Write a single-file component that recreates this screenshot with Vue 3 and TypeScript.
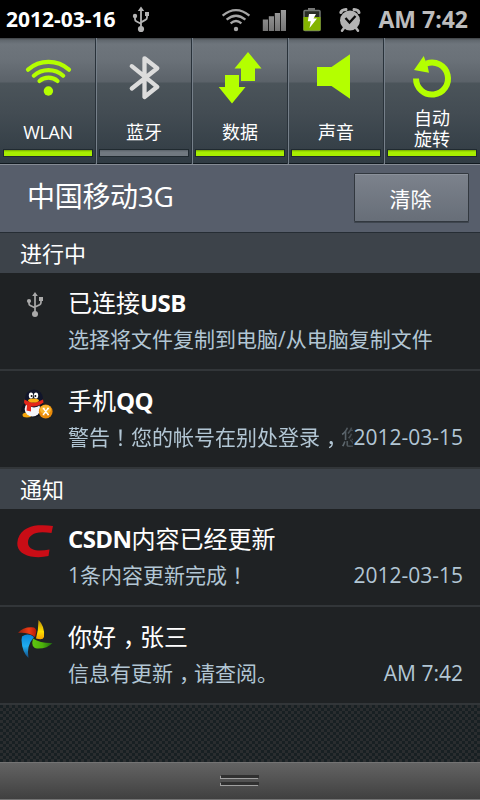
<script setup lang="ts">
interface Tile {
  id: string
  lines: string[]
  on: boolean
  view: string
}
interface Run {
  text: string
  kind: 'plain' | 'strong' | 'mid' | 'comma'
}
interface Notice {
  id: string
  view: string
  title: Run[]
  body: Run[]
  time: string
}
interface Section {
  label: string
  items: Notice[]
}

const plain = (text: string): Run => ({ text, kind: 'plain' })
const strong = (text: string): Run => ({ text, kind: 'strong' })
// Punctuation centred horizontally in its em box
const mid = (text: string): Run => ({ text, kind: 'mid' })
const comma: Run = { text: '，', kind: 'comma' }

const tiles: Tile[] = [
  { id: 'wlan', lines: ['WLAN'], on: true, view: '0 38 96 70' },
  { id: 'bluetooth', lines: ['蓝牙'], on: false, view: '96 38 96 70' },
  { id: 'data', lines: ['数据'], on: true, view: '192 38 96 70' },
  { id: 'sound', lines: ['声音'], on: true, view: '288 38 96 70' },
  { id: 'rotate', lines: ['自动', '旋转'], on: true, view: '384 38 96 70' },
]

const sections: Section[] = [
  {
    label: '进行中',
    items: [
      { id: 'usb', view: '0 273 68 96', title: [plain('已连接'), strong('USB')], body: [plain('选择将文件复制到电脑/从电脑复制文件')], time: '' },
      { id: 'qq', view: '0 371 68 96', title: [plain('手机'), strong('QQ')], body: [plain('警告'), mid('！'), plain('您的帐号在别处登录'), comma, plain('您')], time: '2012-03-15' },
    ],
  },
  {
    label: '通知',
    items: [
      { id: 'csdn', view: '0 509 68 96', title: [strong('CSDN'), plain('内容已经更新')], body: [plain('1条内容更新完成'), mid('！')], time: '2012-03-15' },
      { id: 'pinwheel', view: '0 607 68 96', title: [plain('你好'), comma, plain('张三')], body: [plain('信息有更新'), comma, plain('请查阅。')], time: 'AM 7:42' },
    ],
  },
]
</script>

<template>
  <div class="screen">
    <header class="status">
      <span class="date">2012-03-16</span>
      <svg class="s-usb" viewBox="132 4 18 29" width="18" height="29">
        <g fill="none" stroke="#b4b4b4" stroke-width="1.8">
          <path d="M141 9V28M135 15v3.2q0 1.6 1.6 2.3l4.4 2.2M147 13v3.5q0 1.6-1.6 2.4l-4.4 2.5" />
        </g>
        <path d="M141 5.5l3.2 4.6h-6.4zM145 11h4v4h-4z" fill="#b4b4b4" />
        <circle cx="135" cy="15" r="2.2" fill="#b4b4b4" /><circle cx="141" cy="28" r="3.1" fill="#b4b4b4" />
      </svg>
      <div class="tray">
        <svg viewBox="221 4 30 29" width="30" height="29">
          <g fill="none" stroke="#a6a6a6" stroke-width="2.2">
            <path d="M222.6 14.6Q236 3.600 249.400 14.600M226.600 18.700Q236 10.800 245.400 18.700M230.600 22.300Q236 17.700 241.400 22.300" />
          </g>
          <circle cx="236" cy="28" r="2.200" fill="#a6a6a6" />
        </svg>
        <svg viewBox="262 4 25 29" width="25" height="29">
          <defs><linearGradient id="sig" x1="0" y1="0" x2="0" y2="1"><stop offset="0" stop-color="#9c9c9c" /><stop offset="1" stop-color="#747474" /></linearGradient></defs>
          <path d="M262.800 18.500h5.200v11.500h-5.200zM268.800 15.300h5.200v14.700h-5.200zM274.800 12h5.200v18h-5.200zM280.800 9h5.200v21h-5.200z" fill="url(#sig)" />
        </svg>
        <svg viewBox="302 4 20 29" width="20" height="29">
          <path d="M308 7h7v3h-7z" fill="#777" />
          <rect x="304" y="9.500" width="16" height="20" rx="1" fill="#292d25" stroke="#737875" stroke-width="1.500" />
          <path d="M303.500 16h17v13.500h-17z" fill="#84b400" />
          <path d="M309 13h7l-2.500 4.500h3.500l-7.500 9.500 1.300-6.800h-3z" fill="#fff" />
        </svg>
        <svg viewBox="337 4 27 29" width="27" height="29">
          <g fill="none" stroke="#b3b3b3" stroke-linecap="round">
            <path d="M340.800 11.500Q341.500 9 346 8.600M359 11.500Q358.500 9 354 8.600" stroke-width="3" />
            <path d="M344 27l-2 2.700M356 27l2 2.700" stroke-width="2.500" />
          </g>
          <circle cx="350" cy="19.500" r="10" fill="#b3b3b3" />
          <path d="M345.500 17l4 4.500 6-6.500" fill="none" stroke="#080808" stroke-width="2.300" />
        </svg>
      </div>
      <span class="clock">AM 7:42</span>
    </header>

    <nav class="tiles">
      <div v-for="t in tiles" :key="t.id" class="tile">
        <svg class="tile-icon" :viewBox="t.view" width="96" height="70">
          <g v-if="t.id === 'wlan'">
            <path d="M28 69.700A31 31 0 0 1 69 69.700M33.800 75.700A22 22 0 0 1 63.200 75.700M39.500 81A14 14 0 0 1 57.500 81" fill="none" stroke="#b4ff00" stroke-width="4.200" stroke-linecap="round" />
            <circle cx="48.400" cy="91" r="4.700" fill="#b4ff00" />
          </g>
          <path v-else-if="t.id === 'bluetooth'" d="M131.800 66.200L157.300 86.800 144.500 97V58.300L157.300 68.200 131.800 88.500" fill="none" stroke="#dcdcdc" stroke-width="4.300" stroke-linecap="round" stroke-linejoin="round" />
          <path v-else-if="t.id === 'data'" d="M248 52L261.500 68.500H255V81H241V68.500H234.500ZM225 75H239V87H245.500L232 103.500 218.700 87H225Z" fill="#b4ff00" />
          <path v-else-if="t.id === 'sound'" d="M317 67H331.500L350 54.300V98.700L331.500 86H317Z" fill="#b4ff00" />
          <g v-else>
            <path d="M416 78.500A16 16 0 1 0 426.500 63.500" fill="none" stroke="#b4ff00" stroke-width="6" />
            <path d="M423.700 56L414 70 429 72.700 427.700 66.500 429.500 60.800 425.800 61.500Z" fill="#b4ff00" />
          </g>
        </svg>
        <div class="tile-label" :class="{ double: t.lines.length > 1, latin: t.id === 'wlan' }">
          <span v-for="l in t.lines" :key="l">{{ l }}</span>
        </div>
        <div class="bar" :class="{ on: t.on }"></div>
      </div>
    </nav>

    <div class="carrier">
      <span class="carrier-name">中国移动3G</span>
      <button class="clear" type="button">清除</button>
    </div>

    <section v-for="s in sections" :key="s.label">
      <h2 class="heading">{{ s.label }}</h2>
      <article v-for="n in s.items" :key="n.id" class="row">
        <svg class="row-icon" :viewBox="n.view" width="68" height="96">
          <g v-if="n.id === 'usb'">
            <path d="M35 296V313M29 301v2.500q0 1.500 1.300 2.100l4.700 2.100M41 300v2.500q0 1.500-1.300 2.200l-4.700 2.300" fill="none" stroke="#aaa" stroke-width="1.700" />
            <path d="M35 292l2.800 4h-5.600zM39 297h4v4h-4z" fill="#aaa" />
            <circle cx="29" cy="301" r="2.100" fill="#aaa" /><circle cx="35" cy="314" r="3" fill="#aaa" />
          </g>
          <g v-else-if="n.id === 'qq'">
            <path d="M25 403Q20 407 21.500 412L25 411Z" fill="#11141f" />
            <ellipse cx="33.500" cy="408" rx="10.500" ry="9.500" fill="#11141f" />
            <ellipse cx="27" cy="415" rx="4.500" ry="2.500" fill="#f5a50c" />
            <ellipse cx="32.500" cy="409" rx="7.800" ry="7.500" fill="#f4f6fa" />
            <ellipse cx="34" cy="398.500" rx="9" ry="9" fill="#11152a" />
            <ellipse cx="31" cy="395.500" rx="2.200" ry="3.100" fill="#fff" /><ellipse cx="36" cy="395.500" rx="2.200" ry="3.100" fill="#fff" />
            <circle cx="31.600" cy="396" r="1" fill="#111" /><circle cx="35.400" cy="396" r="1" fill="#111" />
            <path d="M24.500 399.500Q33 405.500 43 399.500L43.500 402.500Q38 407 31 406.500L31 411.500 26.500 410.500 27 405.500Q23 404 24.500 399.500Z" fill="#e52719" />
            <ellipse cx="33.500" cy="400.500" rx="5.500" ry="2" fill="#f9ad13" />
            <circle cx="45.700" cy="411.500" r="6.900" fill="#e88a09" /><ellipse cx="45.500" cy="409.500" rx="5.500" ry="4.500" fill="#f8b42d" />
            <path d="M43.500 408.500l4.500 6M48 408.500l-4.500 6M42.700 408.500h2M47 408.500h2M42.700 414.500h2M47 414.500h2" stroke="#fff" stroke-width="1.300" />
          </g>
          <path v-else-if="n.id === 'csdn'" d="M53 526L51.500 533Q44 532 39 532.500C31 533.500 28 538 28 542.500C28 547.500 32 550 38 550.500Q43 550.800 49.500 549.500L48.500 556Q42 557.500 35 557C23 556 17 550.500 17.300 543C18 531.500 28 526 38 525.300Q46 524.800 53 526Z" fill="#c90d16" />
          <g v-else>
            <defs>
              <linearGradient id="pr" x1="0" x2="1"><stop offset="0" stop-color="#8c2010" /><stop offset=".6" stop-color="#ef3b14" /><stop offset="1" stop-color="#b51a08" /></linearGradient>
              <linearGradient id="py" x1="0" y1="0" x2="0" y2="1"><stop offset="0" stop-color="#b98a08" /><stop offset=".6" stop-color="#ffe000" /><stop offset="1" stop-color="#f5a000" /></linearGradient>
              <linearGradient id="pg" x1="0" x2="1"><stop offset="0" stop-color="#5fc811" /><stop offset=".5" stop-color="#4db30a" /><stop offset="1" stop-color="#1e6612" /></linearGradient>
              <linearGradient id="pb" x1="0" y1="0" x2="0" y2="1"><stop offset="0" stop-color="#0a86d8" /><stop offset=".5" stop-color="#20adf0" /><stop offset="1" stop-color="#124a80" /></linearGradient>
            </defs>
            <path d="M18 633Q23 626.500 34 627.500Q37 629 36 633L35 637Q28 632 18 633Z" fill="url(#pr)" />
            <path d="M38.500 620Q45 626 44 637Q43 640.500 36 638.500Q38.500 630 38.500 620Z" fill="url(#py)" />
            <path d="M33 638.500Q41 643.500 52.500 643Q47 649 37 648.500Q30.500 647.500 33 638.500Z" fill="url(#pg)" />
            <path d="M22 636.500Q28 632.500 34 637Q26 646 28.500 658Q22 652 21.500 640Z" fill="url(#pb)" />
          </g>
        </svg>
        <div class="content">
          <div class="title">
            <span v-for="(r, i) in n.title" :key="i" :class="r.kind">{{ r.text }}</span>
          </div>
          <div class="detail">
            <div class="body" :class="{ faded: n.id === 'qq' }">
              <span v-for="(r, i) in n.body" :key="i" :class="r.kind">{{ r.text }}</span>
            </div>
            <time v-if="n.time" class="time">{{ n.time }}</time>
          </div>
        </div>
      </article>
    </section>

    <div class="empty"></div>
    <footer class="handle">
      <div class="grip"></div>
      <div class="grip"></div>
    </footer>
  </div>
</template>

<style>
body {
  margin: 0;
  background: #000;
}
</style>

<style scoped>
.screen {
  display: flex;
  flex-direction: column;
  width: 480px;
  height: 800px;
  overflow: hidden;
  background: #1f2224;
  color: #fff;
  font-family: 'Open Sans', 'Noto Sans CJK SC', sans-serif;
}
.status {
  box-sizing: border-box;
  display: flex;
  align-items: center;
  height: 38px;
  padding: 0 12px 0 6px;
  background: #000;
  flex: none;
}
.status svg {
  display: block;
}
.date {
  width: 126px;
  font-size: 21px;
  font-weight: 700;
  line-height: 38px;
}
.tray {
  display: flex;
  flex: 1;
  padding-left: 71px;
  gap: 0 15px;
}
.tray svg:first-child {
  margin-right: -4px;
}
.clock {
  color: #bcbcbc;
  font-size: 23px;
  font-weight: 700;
  line-height: 38px;
  white-space: nowrap;
}
.tiles {
  display: grid;
  grid-template-columns: repeat(5, 96px);
  height: 126px;
  flex: none;
  background: linear-gradient(#3c3f42 0, #60676d 2px, #6e757c 6px, #6a7178 22px, #5b6269 44px, #4b545a 45px, #434c53 75px, #303b43 125px, #11191f 125px);
}
.tile {
  display: flex;
  flex-direction: column;
  align-items: center;
  box-shadow: inset -1px 0 #29323a, inset 1px 0 #76808a;
}
.tile:first-child {
  box-shadow: inset -1px 0 #29323a;
}
.tile:last-child {
  box-shadow: inset 1px 0 #76808a;
}
.tile-icon {
  display: block;
  flex: none;
}
.tile-label {
  display: flex;
  flex-direction: column;
  justify-content: center;
  height: 41px;
  font-size: 18px;
  line-height: 21px;
  text-align: center;
  padding-top: 8px;
  box-sizing: border-box;
}
.tile-label.double {
  padding-top: 0;
}
.tile-label.latin {
  letter-spacing: -0.4px;
}
.bar {
  box-sizing: border-box;
  width: 90px;
  height: 8px;
  border: 1px solid #202a30;
  background: linear-gradient(#596168, #717980 2px);
}
.bar.on {
  background: linear-gradient(#75a800, #a8ee00 2px);
}
.carrier {
  box-sizing: border-box;
  display: flex;
  justify-content: space-between;
  align-items: center;
  height: 69px;
  padding: 0 11px 2px 27px;
  border-top: 1px solid #858b94;
  border-bottom: 1px solid #262d34;
  background: #575e6b;
  flex: none;
}
.carrier-name {
  font-size: 28px;
  line-height: 40px;
  padding-bottom: 3px;
  letter-spacing: -0.3px;
  white-space: nowrap;
}
.clear {
  box-sizing: border-box;
  width: 115px;
  height: 49px;
  padding: 1px 2px 0 0;
  border: 1px solid #32383f;
  border-radius: 1px;
  background: linear-gradient(#7c828c, #676e78);
  box-shadow: inset 0 1px #8b919a, 0 1px #3e454e;
  color: #fff;
  font: 21px 'Open Sans', 'Noto Sans CJK SC', sans-serif;
}
.heading {
  box-sizing: border-box;
  height: 40px;
  margin: 0;
  padding: 2px 20px 0;
  background: #3d434a;
  font-size: 22px;
  font-weight: 400;
  line-height: 37px;
}
.row {
  box-sizing: border-box;
  display: flex;
  height: 98px;
  border-bottom: 2px solid #323639;
  background: #1f2224;
}
.row-icon {
  flex: none;
}
.content {
  flex: 1;
  min-width: 0;
  padding: 14px 17px 0 0;
}
.title {
  font-size: 24px;
  line-height: 32px;
  white-space: nowrap;
}
.detail {
  display: flex;
  margin-top: 5px;
  color: #b2c6d4;
  font-size: 21px;
  line-height: 30px;
  white-space: nowrap;
}
.body {
  flex: 1;
  min-width: 0;
  overflow: hidden;
}
.faded {
  -webkit-mask-image: linear-gradient(90deg, #000 266px, rgba(0, 0, 0, 0.5) 273px, rgba(0, 0, 0, 0.2) 285px);
  mask-image: linear-gradient(90deg, #000 266px, rgba(0, 0, 0, 0.5) 273px, rgba(0, 0, 0, 0.2) 285px);
}
.time {
  flex: none;
}
.strong {
  font-weight: 700;
  letter-spacing: -0.6px;
}
.mid {
  font-family: 'Open Sans', 'Noto Sans CJK TC', sans-serif;
}
.comma {
  padding-left: 0.28em;
  margin-right: -0.28em;
}
.empty {
  flex: 1;
  background: repeating-conic-gradient(#2a2d2f 0 25%, #182023 0 50%) 0 0 / 6px 6px;
}
.handle {
  box-sizing: border-box;
  display: flex;
  flex-direction: column;
  align-items: center;
  gap: 3px;
  height: 38px;
  padding-top: 12px;
  border-top: 1px solid #747474;
  border-bottom: 1px solid #747474;
  background: linear-gradient(#636363, #404040);
  flex: none;
}
.grip {
  width: 38px;
  height: 3px;
  background: #303030;
  box-shadow: -1px 1px #a0a0a0;
  margin-bottom: 1px;
}
</style>
